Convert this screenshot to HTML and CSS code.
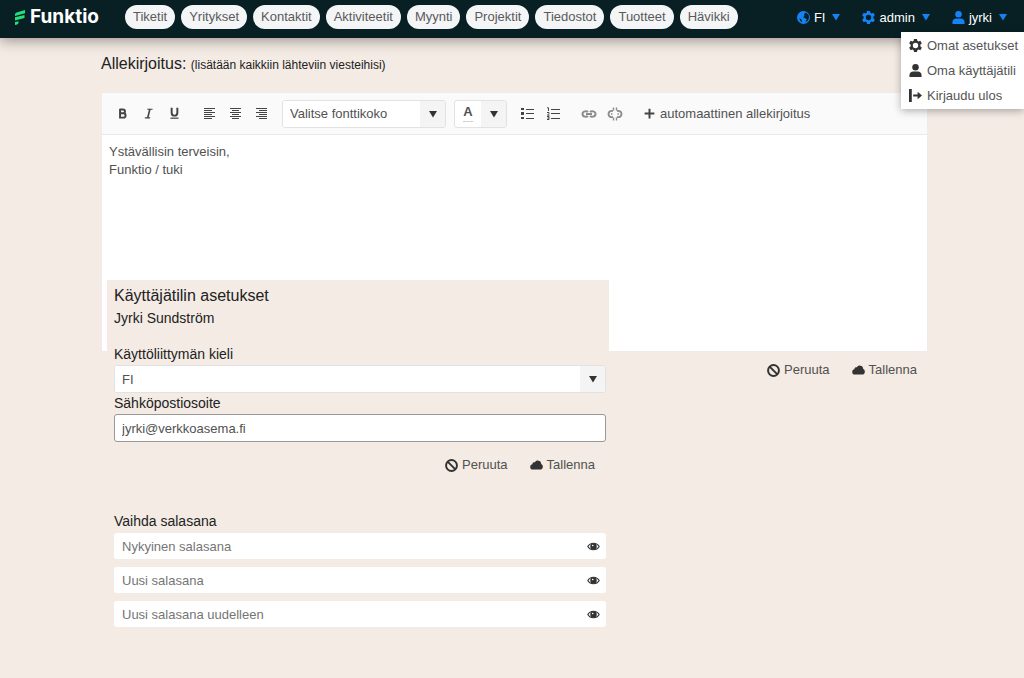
FILE: index.html
```html
<!DOCTYPE html>
<html lang="fi">
<head>
<meta charset="utf-8">
<meta name="viewport" content="width=device-width, initial-scale=1">
<title>Funktio – Allekirjoitus</title>
<link rel="stylesheet" href="styles.css">
</head>
<body>
<svg class="sprite" aria-hidden="true">
  <symbol id="i-gear" viewBox="1 1 14 14"><path fill-rule="evenodd" d="M6.400 1h3.200l.4 2 1.200.7 2-.8 1.600 2.800-1.600 1.400v1.800l1.600 1.400-1.600 2.800-2-.8-1.200.7-.4 2H6.400l-.4-2-1.200-.7-2 .8-1.600-2.800 1.600-1.400V7.100L1.200 5.700l1.600-2.800 2 .8L6 3zM8 5.100a2.900 2.900 0 1 0 0 5.800 2.900 2.900 0 0 0 0-5.800z"/></symbol>
  <symbol id="i-user" viewBox="1 1 14 14"><circle cx="8" cy="4.500" r="3.500"/><path d="M1.500 15v-2c0-2.800 1.900-4 4-4h5c2.100 0 4 1.200 4 4v2z"/></symbol>
  <symbol id="i-globe" viewBox="1 1 14 14"><path fill-rule="evenodd" d="M8 1a7 7 0 1 1 0 14A7 7 0 0 1 8 1zM10.500 2.500L8.500 4.500l.5 2-1.500 1.500 2 .5 2 1.500-1.500 3.500 3-2.500 1-3-.5-3zM3.500 8.500l1 3 2 2-.5-3z"/></symbol>
  <symbol id="i-exit" viewBox="1 1 14 14"><path d="M1 1h3v14H1zM5.500 7h4.800V4L15 8l-4.700 4V9H5.500z"/></symbol>
  <symbol id="i-cancel" viewBox="0 0 16 16"><g fill="none" stroke="currentColor" stroke-width="2.400"><circle cx="8" cy="8" r="6.700"/><path d="M3.500 3.500l9 9"/></g></symbol>
  <symbol id="i-cloud" viewBox="0 1 16 16"><path d="M3.500 14A3.300 3.300 0 0 1 .3 10.700c0-1.800 1.200-3 2.700-3.200C3 5.600 4.400 4.800 6 5.100c.8-1.500 2.400-2.300 4.200-2.100 2.300.2 3.800 2 3.600 4.200 1.300.6 2 1.900 2 3.300 0 2-1.300 3.500-3.300 3.500z"/></symbol>
  <symbol id="i-eye" viewBox="0 0 16 16"><path fill="none" stroke="currentColor" stroke-width="1.400" d="M1 8c1.700-2.900 4.100-4 7-4s5.300 1.100 7 4c-1.700 2.900-4.100 4-7 4S2.700 10.900 1 8z"/><path fill-rule="evenodd" d="M8 4a4 4 0 1 1 0 8 4 4 0 0 1 0-8zM7 5.800a1 1 0 1 0 .1 2 1 1 0 0 0-.1-2z"/></symbol>
  <symbol id="i-left" viewBox="0 0 13 13"><path d="M1 1h11v1H1zM1 3h8v1H1zM1 5h11v1H1zM1 7h8v1H1zM1 9h11v1H1zM1 11h8v1H1z"/></symbol>
  <symbol id="i-center" viewBox="0 0 13 13"><path d="M1 1h11v1H1zM3 3h7v1H3zM1 5h11v1H1zM3 7h7v1H3zM1 9h11v1H1zM3 11h7v1H3z"/></symbol>
  <symbol id="i-right" viewBox="0 0 13 13"><path d="M1 1h11v1H1zM4 3h8v1H4zM1 5h11v1H1zM4 7h8v1H4zM1 9h11v1H1zM4 11h8v1H4z"/></symbol>
  <symbol id="i-ul" viewBox="0 0 13 13"><path d="M0 1h3v2H0zM0 5h3v3H0zM0 10h3v2H0zM5 2h8v1H5zM5 6h8v1H5zM5 11h8v1H5z"/></symbol>
  <symbol id="i-ol" viewBox="0 0 13 13"><path d="M4 2h9v1H4zM4 6h9v1H4zM4 11h9v1H4z"/><path fill="none" stroke="currentColor" d="M0 .8h1.500V4M0 5.500h2v1L.5 8.200h2M0 9.500h2v3H0M.5 11h1.500"/></symbol>
  <symbol id="i-bold" viewBox="0 0 16 16"><path fill="none" stroke="currentColor" stroke-width="2.400" d="M5 3h3.500c3.400 0 3.400 4.800 0 4.800H5M5 7.800h4c3.700 0 3.700 5.300 0 5.300H5M5 2v12"/></symbol>
  <symbol id="i-italic" viewBox="0 0 16 16"><path fill="none" stroke="currentColor" stroke-width="1.400" d="M6.500 2.700H13M3.500 13.300H10"/><path fill="none" stroke="currentColor" stroke-width="2" d="M9.700 2.500L7 13.500"/></symbol>
  <symbol id="i-underline" viewBox="0 0 16 16"><path fill="none" stroke="currentColor" stroke-width="2.400" d="M4.500 1v6c0 4.800 7 4.800 7 0V1"/><path d="M3 13h10v1.500H3z"/></symbol>
  <symbol id="i-link" viewBox="0 0 16 16"><path fill="none" stroke="currentColor" stroke-width="2" d="M7 10c-1 1-5.500 1.300-5.500-2S6 5 7 6M9 6c1-1 5.500-1.300 5.500 2S10 11 9 10M5 8h6"/></symbol>
  <symbol id="i-unlink" viewBox="0 0 16 16"><path fill="none" stroke="currentColor" stroke-width="1.900" d="M6 5C3.500 4.500 1.500 5.500 1.500 8s2 3.500 4.500 3M10 5c2.500-.5 4.500.5 4.500 3s-2 3.500-4.500 3"/><path fill="none" stroke="currentColor" stroke-width="1.400" d="M6.500 1.500v3M9.500 1.500v3M6.500 11.500v3M9.500 11.500v3M4 8h1.500M10.500 8H12"/></symbol>
  <symbol id="i-plus" viewBox="0 0 16 16"><path d="M6.800 2h2.400v4.800H14v2.400H9.200V14H6.800V9.200H2V6.800h4.800z"/></symbol>
  <symbol id="i-down" viewBox="0 0 8 8"><path d="M0 1h8L4 7.500z"/></symbol>
</svg>

<header class="topbar">
  <a class="brand" href="#">
    <svg class="brand-mark" viewBox="0 0 12 17" aria-hidden="true"><path d="M1 5.500Q1 4 2.600 3.500L11 1v3.200L1 7zM1 8.300L10.500 6v3L1 11.500zM1 13l3.500-.8v1.600Q4.200 15.800 1 16z"/></svg>
    <span>Funktio</span>
  </a>
  <nav class="menu" aria-label="Päävalikko">
    <a href="#">Tiketit</a><a href="#">Yritykset</a><a href="#">Kontaktit</a><a href="#">Aktiviteetit</a><a href="#">Myynti</a><a href="#">Projektit</a><a href="#">Tiedostot</a><a href="#">Tuotteet</a><a href="#">Hävikki</a>
  </nav>
  <div class="tools">
    <button type="button" class="tool"><svg class="icon"><use href="#i-globe"/></svg>FI<svg class="caret"><use href="#i-down"/></svg></button>
    <button type="button" class="tool"><svg class="icon"><use href="#i-gear"/></svg>admin<svg class="caret"><use href="#i-down"/></svg></button>
    <div class="user">
      <button type="button" class="tool" aria-expanded="true"><svg class="icon"><use href="#i-user"/></svg>jyrki<svg class="caret"><use href="#i-down"/></svg></button>
      <div class="dropdown">
        <a href="#"><svg class="icon"><use href="#i-gear"/></svg>Omat asetukset</a>
        <a href="#"><svg class="icon"><use href="#i-user"/></svg>Oma käyttäjätili</a>
        <a href="#"><svg class="icon"><use href="#i-exit"/></svg>Kirjaudu ulos</a>
      </div>
    </div>
  </div>
</header>

<main class="page">
  <h1 class="title"><label for="signature">Allekirjoitus: <small>(lisätään kaikkiin lähteviin viesteihisi)</small></label></h1>
  <section class="editor">
    <div class="toolbar">
      <div class="group">
        <button type="button" aria-label="Lihavointi"><svg class="icon"><use href="#i-bold"/></svg></button>
        <button type="button" aria-label="Kursivointi"><svg class="icon"><use href="#i-italic"/></svg></button>
        <button type="button" aria-label="Alleviivaus"><svg class="icon"><use href="#i-underline"/></svg></button>
      </div>
      <div class="group align">
        <button type="button" aria-label="Tasaa vasemmalle"><svg class="icon"><use href="#i-left"/></svg></button>
        <button type="button" aria-label="Keskitä"><svg class="icon"><use href="#i-center"/></svg></button>
        <button type="button" aria-label="Tasaa oikealle"><svg class="icon"><use href="#i-right"/></svg></button>
      </div>
      <div class="picker font-size">
        <select aria-label="Fonttikoko"><option>Valitse fonttikoko</option></select>
        <span class="picker-arrow"><svg class="caret"><use href="#i-down"/></svg></span>
      </div>
      <button type="button" class="picker color" aria-label="Tekstin väri">
        <span class="letter"><span class="swatch">A</span></span>
        <span class="picker-arrow"><svg class="caret"><use href="#i-down"/></svg></span>
      </button>
      <div class="group">
        <button type="button" aria-label="Luettelo"><svg class="icon"><use href="#i-ul"/></svg></button>
        <button type="button" aria-label="Numeroitu luettelo"><svg class="icon"><use href="#i-ol"/></svg></button>
      </div>
      <div class="group muted">
        <button type="button" aria-label="Lisää linkki"><svg class="icon large"><use href="#i-link"/></svg></button>
        <button type="button" aria-label="Poista linkki"><svg class="icon large"><use href="#i-unlink"/></svg></button>
      </div>
      <button type="button" class="auto"><svg class="icon"><use href="#i-plus"/></svg>automaattinen allekirjoitus</button>
    </div>
    <textarea id="signature" class="content">Ystävällisin terveisin,
Funktio / tuki</textarea>
  </section>
  <div class="actions">
    <button type="button"><svg class="icon"><use href="#i-cancel"/></svg>Peruuta</button>
    <button type="button"><svg class="icon"><use href="#i-cloud"/></svg>Tallenna</button>
  </div>

  <form class="account">
    <h2>Käyttäjätilin asetukset</h2>
    <p class="name">Jyrki Sundström</p>
    <label for="lang">Käyttöliittymän kieli</label>
    <div class="picker">
      <select id="lang"><option>FI</option></select>
      <span class="picker-arrow"><svg class="caret"><use href="#i-down"/></svg></span>
    </div>
    <label for="email">Sähköpostiosoite</label>
    <input id="email" class="email" type="email" value="jyrki@verkkoasema.fi">
    <div class="actions">
      <button type="button"><svg class="icon"><use href="#i-cancel"/></svg>Peruuta</button>
      <button type="button"><svg class="icon"><use href="#i-cloud"/></svg>Tallenna</button>
    </div>
    <fieldset class="passwords">
      <legend>Vaihda salasana</legend>
      <div class="secret"><input type="password" placeholder="Nykyinen salasana" aria-label="Nykyinen salasana"><button type="button" aria-label="Näytä"><svg class="icon"><use href="#i-eye"/></svg></button></div>
      <div class="secret"><input type="password" placeholder="Uusi salasana" aria-label="Uusi salasana"><button type="button" aria-label="Näytä"><svg class="icon"><use href="#i-eye"/></svg></button></div>
      <div class="secret"><input type="password" placeholder="Uusi salasana uudelleen" aria-label="Uusi salasana uudelleen"><button type="button" aria-label="Näytä"><svg class="icon"><use href="#i-eye"/></svg></button></div>
    </fieldset>
  </form>
</main>
</body>
</html>
```
FILE: styles.css
```css
* { box-sizing: border-box; }

body {
  margin: 0;
  min-height: 100vh;
  background: #f3ebe4;
  color: #222;
  font-family: "Liberation Sans", Arial, sans-serif;
  font-size: 13px;
}

button, input, select, textarea { font: inherit; color: #515151; }
button { border: 0; padding: 0; background: none; cursor: pointer; }
a { color: inherit; text-decoration: none; }

.sprite { position: absolute; width: 0; height: 0; }
.icon { width: 13px; height: 13px; fill: currentColor; flex: none; }
.icon.large { width: 16px; height: 16px; }
.caret { width: 8px; height: 8px; fill: currentColor; flex: none; }

/* Top bar */
.topbar {
  display: flex;
  align-items: center;
  height: 38px;
  padding: 0 9px 4px 14px;
  background: #082024;
  box-shadow: 0 2px 14px rgba(60, 40, 40, .5);
}
.brand {
  display: flex;
  align-items: center;
  gap: 4px;
  width: 111px;
  color: #fff;
  font: 700 19px/24px Inter, sans-serif;
}
.brand-mark { width: 12px; height: 17px; fill: #21e07b; }
.menu { display: flex; gap: 6px; }
.menu a {
  padding: 0 8px;
  border-radius: 12px;
  background: #f4f5f6;
  color: #5a5a5a;
  line-height: 24px;
}
.tools { display: flex; align-items: center; gap: 22px; margin-left: auto; }
.tool {
  display: flex;
  align-items: center;
  gap: 4px;
  height: 34px;
  color: #fff;
}
.tool .icon { color: #1583f5; }
.tool .caret { margin-left: 3px; color: #1583f5; }
.user { position: relative; padding-right: 8px; }
.dropdown {
  position: absolute;
  z-index: 2;
  top: 32px;
  right: -9px;
  width: 123px;
  padding: 1px 8px;
  background: #fff;
  box-shadow: 0 2px 8px rgba(0, 0, 0, .3);
  color: #555;
}
.dropdown a { display: flex; align-items: center; gap: 5px; line-height: 25px; white-space: nowrap; }
.dropdown .icon { color: #333; }

/* Signature editor */
.page { padding: 17px 96px 0 101px; }
.title { margin: 0 0 18px; font-size: 16px; font-weight: 400; line-height: 18px; }
.title small { font-size: 12px; }
.editor { background: #fff; border: 1px solid #f0ebe7; }
.toolbar {
  display: flex;
  align-items: center;
  height: 42px;
  padding: 0 15px 0 14px;
  background: #fafafa;
  border-bottom: 1px solid #e9e9e9;
}
.toolbar .icon { color: #444; }
.group { display: flex; gap: 13px; margin-right: 22px; }
.group.align { margin-right: 14px; }
.group button { display: flex; align-items: center; justify-content: center; width: 13px; height: 26px; }
.toolbar .muted .icon { color: #8c8c8c; }
.auto { display: flex; align-items: center; gap: 4px; }
.picker {
  display: flex;
  align-items: stretch;
  height: 28px;
  border: 1px solid #e2e2e2;
  border-radius: 3px;
  background: #fff;
  overflow: hidden;
}
.picker select {
  flex: 1;
  min-width: 0;
  padding: 0 7px;
  border: 0;
  outline: 0;
  appearance: none;
  background: #fff;
}
.picker-arrow {
  display: flex;
  align-items: center;
  justify-content: center;
  width: 25px;
  background: #f4f4f5;
  color: #333;
}
.font-size { width: 164px; margin-right: 8px; }
.color { width: 53px; margin-right: 14px; }
.letter { flex: 1; font-weight: 700; line-height: 18px; padding-top: 2px; }
.swatch { padding-bottom: 2px; border-bottom: 1px dashed #ccc; }
.content {
  display: block;
  width: 100%;
  height: 216px;
  padding: 8px 7px;
  border: 0;
  outline: 0;
  resize: none;
  background: #fff;
  line-height: 18px;
}
.actions { display: flex; justify-content: flex-end; gap: 22px; padding: 9px 11px; }
.actions button { display: flex; align-items: center; gap: 4px; line-height: 18px; }
.actions .icon { color: #333; }

/* Account settings panel, overlapping the bottom of the editor */
.account {
  position: relative;
  width: 61%;
  max-width: 502px;
  margin: -108px 0 0 6px;
  padding: 6px 3px 6px 7px;
  background: #f3ebe4;
}
.account h2 { margin: 0; font-size: 16px; font-weight: 400; line-height: 20px; }
.name { margin: 0 0 14px; font-size: 14px; line-height: 24px; }
.account > label { display: block; font-size: 14px; line-height: 21px; }
.email {
  display: block;
  width: 100%;
  height: 28px;
  padding: 0 7px;
  border: 1px solid #9b9895;
  border-radius: 3px;
  outline: 0;
  background: #fff;
}
.account .actions { padding: 14px 11px 0; }
.passwords { display: grid; gap: 8px; margin: 36px 0 0; padding: 0; border: 0; }
.passwords legend { padding: 0; font-size: 14px; line-height: 23px; }
.secret { display: flex; height: 26px; padding: 0 6px 0 8px; border-radius: 3px; background: #fff; }
.secret input { flex: 1; min-width: 0; padding: 0; border: 0; outline: 0; background: none; }
.secret input::placeholder { color: #757575; }
.secret button { display: flex; align-items: center; }
.secret .icon { color: #333; }
```
